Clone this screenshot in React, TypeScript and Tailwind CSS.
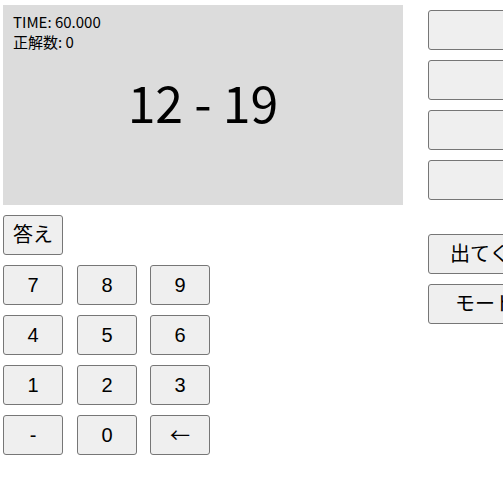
const keyRows = [
  ["7", "8", "9"],
  ["4", "5", "6"],
  ["1", "2", "3"],
  ["-", "0", "←"],
];

const btn =
  "h-[40px] w-[60px] shrink-0 rounded-[3px] border border-[#767676] bg-[#efefef] text-[20px] text-black";

export default function App() {
  return (
    <div
      className="flex h-screen w-screen overflow-hidden bg-white pl-[3px] pt-[5px]"
      style={{ fontFamily: '"Liberation Sans", "Noto Sans CJK JP", sans-serif' }}
    >
      <div className="flex w-[400px] shrink-0 flex-col gap-[10px]">
        <div className="grid h-[200px] w-[400px] bg-[#dcdcdc] text-black [font-family:'Noto_Sans_CJK_JP',sans-serif]">
          <div className="col-start-1 row-start-1 px-[10px] pt-[7px] text-[15px] leading-[20px]">
            <div>TIME: 60.000</div>
            <div>正解数: 0</div>
          </div>
          <div className="col-start-1 row-start-1 flex items-center justify-center pb-[8px] text-[50px]">
            12 - 19
          </div>
        </div>
        <div>
          <button className={btn}>答え</button>
        </div>
        {keyRows.map((row, i) => (
          <div key={i} className="flex">
            <button className={btn}>{row[0]}</button>
            <button className={btn + " ml-[14px]"}>{row[1]}</button>
            <button className={btn + " ml-[13px]"}>
              {row[2] === "←" ? (
                <span className="[font-family:'Noto_Sans_CJK_JP',sans-serif]">←</span>
              ) : (
                row[2]
              )}
            </button>
          </div>
        ))}
      </div>

      <div className="ml-[25px] flex shrink-0 flex-col pt-[5px]">
        <div className="flex flex-col gap-[10px]">
          <button className="h-[40px] w-[120px] rounded-[3px] border border-[#767676] bg-[#efefef]" />
          <button className="h-[40px] w-[120px] rounded-[3px] border border-[#767676] bg-[#efefef]" />
          <button className="h-[40px] w-[120px] rounded-[3px] border border-[#767676] bg-[#efefef]" />
          <button className="h-[40px] w-[120px] rounded-[3px] border border-[#767676] bg-[#efefef]" />
        </div>
        <div className="mt-[34px] flex flex-col gap-[10px]">
          <button className="h-[40px] w-[160px] whitespace-nowrap rounded-[3px] border border-[#767676] bg-[#efefef] pl-[21px] text-left text-[20px]">
            出てくる数字
          </button>
          <button className="h-[40px] w-[160px] whitespace-nowrap rounded-[3px] border border-[#767676] bg-[#efefef] pl-[26px] text-left text-[20px]">
            モード切替
          </button>
        </div>
      </div>
    </div>
  );
}
